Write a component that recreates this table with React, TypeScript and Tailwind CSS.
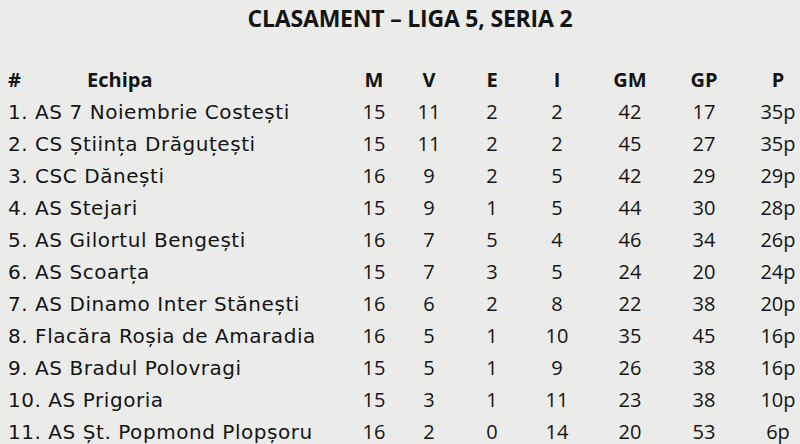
const rows: [string, number, number, number, number, number, number, string][] = [
  ['1. AS 7 Noiembrie Costești', 15, 11, 2, 2, 42, 17, '35p'],
  ['2. CS Știința Drăguțești', 15, 11, 2, 2, 45, 27, '35p'],
  ['3. CSC Dănești', 16, 9, 2, 5, 42, 29, '29p'],
  ['4. AS Stejari', 15, 9, 1, 5, 44, 30, '28p'],
  ['5. AS Gilortul Bengești', 16, 7, 5, 4, 46, 34, '26p'],
  ['6. AS Scoarța', 15, 7, 3, 5, 24, 20, '24p'],
  ['7. AS Dinamo Inter Stănești', 16, 6, 2, 8, 22, 38, '20p'],
  ['8. Flacăra Roșia de Amaradia', 16, 5, 1, 10, 35, 45, '16p'],
  ['9. AS Bradul Polovragi', 15, 5, 1, 9, 26, 38, '16p'],
  ['10. AS Prigoria', 15, 3, 1, 11, 23, 38, '10p'],
  ['11. AS Șt. Popmond Plopșoru', 16, 2, 0, 14, 20, 53, '6p'],
]

const grid = 'grid grid-cols-[336px_60px_50px_76px_54px_92px_56px_68px] h-8 items-center'

function App() {
  return (
    <div
      className="w-[800px] h-[444px] overflow-hidden bg-[#ebecea] text-[#141414]"
      style={{ fontFamily: '"Open Sans", sans-serif' }}
    >
      <h1 className="h-9 pl-5 flex items-center justify-center text-[23px] font-bold tracking-[-0.2px]">
        CLASAMENT – LIGA 5, SERIA 2
      </h1>
      <div className="pl-2 pt-7 text-[20px] leading-none">
        <div className={grid + ' font-bold'}>
          <div className="flex">
            <span className="w-[79px]">#</span>
            <span>Echipa</span>
          </div>
          <span className="text-center">M</span>
          <span className="text-center">V</span>
          <span className="text-center">E</span>
          <span className="text-center">I</span>
          <span className="text-center">GM</span>
          <span className="text-center">GP</span>
          <span className="text-center pl-6">P</span>
        </div>
        {rows.map((r) => (
          <div key={r[0]} className={grid}>
            <span
              className="whitespace-nowrap text-[20px] tracking-[0.55px]"
              style={{ fontFamily: '"DejaVu Sans", sans-serif' }}
            >
              {r[0]}
            </span>
            <span className="text-center">{r[1]}</span>
            <span className="text-center">{r[2]}</span>
            <span className="text-center">{r[3]}</span>
            <span className="text-center">{r[4]}</span>
            <span className="text-center">{r[5]}</span>
            <span className="text-center">{r[6]}</span>
            <span className="text-center pl-6">{r[7]}</span>
          </div>
        ))}
      </div>
    </div>
  )
}

export default App
